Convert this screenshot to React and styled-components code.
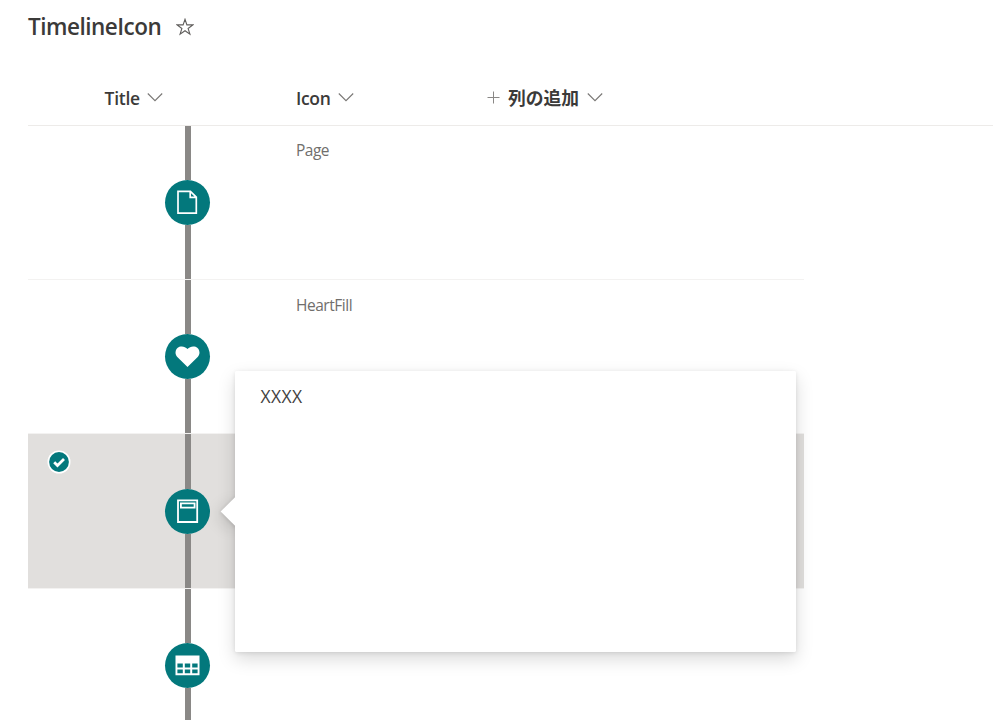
import React from "react";
import styled, { createGlobalStyle } from "styled-components";

const Global = createGlobalStyle`
  *, *::before, *::after { box-sizing: border-box; }
  body {
    margin: 0;
    background: #fff;
    overflow: hidden;
    font-family: "Open Sans", "Noto Sans CJK JP", sans-serif;
  }
  svg { display: block; flex: none; }
`;

const Page = styled.main`
  height: 720px;
  padding-left: 28px;
  overflow: hidden;
  background: #fff;
`;

const Heading = styled.header`
  display: flex;
  align-items: center;
  height: 54px;
  gap: 14.5px;
  padding-bottom: 1px;
`;

const ListTitle = styled.h1`
  margin: 0;
  width: 133px;
  font-size: 22.5px;
  line-height: 30px;
  font-weight: 600;
  letter-spacing: -0.5px;
  color: #3b3a39;
  white-space: nowrap;
`;

const columns = "76.5px 191.5px 191px 1fr";

const HeaderRow = styled.div`
  display: grid;
  grid-template-columns: ${columns};
  align-items: center;
  height: 72px;
  padding-top: 16px;
  border-bottom: 1px solid #edebe9;
`;

const HeaderCell = styled.div`
  display: flex;
  align-items: center;
  gap: 8px;
  color: #3b3a39;
`;

const HeaderLabel = styled.span`
  width: ${(p) => p.$width}px;
  font-size: ${(p) => p.$size || 17.5}px;
  line-height: 24px;
  font-weight: ${(p) => p.$weight || 600};
  letter-spacing: ${(p) => p.$spacing || 0}px;
  white-space: nowrap;
`;

const Row = styled.div`
  display: grid;
  grid-template-columns: 76.5px 191.5px 508px;
  width: 776px;
  height: ${(p) => p.$height}px;
  border-bottom: 1px solid #f3f2f1;
  background: ${(p) => (p.$selected ? "#e1dfdd" : "#fff")};
  background-clip: padding-box;
`;

const SelectCell = styled.div`
  padding: 15.5px 0 0 18.7px;
`;

const TimelineCell = styled.div`
  position: relative;
  display: flex;
  flex-direction: column;
  align-items: center;
  width: 166px;
`;

const Segment = styled.div`
  flex: 1;
  width: 6px;
  background: #8a8886;
`;

const Marker = styled.div`
  display: flex;
  align-items: center;
  justify-content: center;
  width: 45px;
  height: 45px;
  flex: none;
  border-radius: 50%;
  background: #03787c;
`;

const IconName = styled.div`
  padding-top: ${(p) => p.$top}px;
  font-size: 15.5px;
  line-height: 22px;
  letter-spacing: ${(p) => p.$spacing}px;
  color: #706e6c;
`;

/* Opens to the right of the marker whose cell it belongs to. */
const Callout = styled.aside`
  position: absolute;
  left: 130px;
  top: -63px;
  z-index: 2;
  width: 561.5px;
  height: 281px;
  border-radius: 2px;
  background: #fff;
  box-shadow: 0 7px 18px rgba(0, 0, 0, 0.15), 0 1px 4px rgba(0, 0, 0, 0.1);
`;

const Beak = styled.div`
  position: absolute;
  left: -10px;
  top: 130px;
  width: 21px;
  height: 21px;
  background: #fff;
  transform: rotate(45deg);
  box-shadow: 0 6px 16px rgba(0, 0, 0, 0.12), 0 1px 4px rgba(0, 0, 0, 0.1);
`;

const CalloutBody = styled.div`
  position: absolute;
  inset: 0;
  padding: 13px 26px;
  border-radius: 2px;
  background: #fff;
  font-size: 17.5px;
  line-height: 24px;
  letter-spacing: 0.4px;
  color: #424140;
`;

const Star = () => (
  <svg width="18" height="18" viewBox="0 0 18 18" fill="none" stroke="#605e5c" strokeWidth="1.1">
    <path d="M9 1.3 10.9 6.9H16.8L12.1 10.5 13.9 16.2 9 12.7 4.1 16.2 5.9 10.5 1.2 6.9H7.1Z" />
  </svg>
);

const Chevron = () => (
  <svg width="16" height="12" viewBox="0 0 16 12" fill="none" stroke="#797775" strokeWidth="1.1">
    <path d="M.8 1.5 8 8.7 15.2 1.5" />
  </svg>
);

const Plus = () => (
  <svg width="13" height="13" viewBox="0 0 13 13" fill="none" stroke="#8a8886" strokeWidth="1">
    <path d="M.5 6.5H12.5M6.5 .5V12.5" />
  </svg>
);

const Check = () => (
  <svg width="24" height="24" viewBox="0 0 24 24" fill="none">
    <circle cx="12" cy="12" r="11.5" fill="#fff" />
    <circle cx="12" cy="12" r="9.9" fill="#03787c" />
    <path d="M7.2 12.2 10.5 15.5 17 9.1" stroke="#fff" strokeWidth="2.8" />
  </svg>
);

const icons = {
  Page: (
    <svg width="25" height="25" viewBox="0 0 25 25" fill="none" stroke="#fff" strokeWidth="1.7">
      <path d="M3 1.3H15.4L21.3 7.2V23.1H3ZM15.2 1.6V7.3H21" />
    </svg>
  ),
  HeartFill: (
    <svg width="25" height="25" viewBox="0 0 25 25" fill="#fff">
      <path d="M12.5 23.1 2.3 13C-.8 9.8.3 4.2 4.4 2.8 7.4 1.8 10.4 2.7 12.5 5.1 14.6 2.7 17.6 1.8 20.6 2.8 24.7 4.2 25.8 9.8 22.7 13Z" />
    </svg>
  ),
  Dictionary: (
    <svg width="25" height="25" viewBox="0 0 25 25" fill="none" stroke="#fff" strokeWidth="1.8">
      <path d="M3 1.4H22.2V23H3ZM5.9 4.4H19.6V8.6H5.9Z" />
    </svg>
  ),
  Table: (
    <svg width="25" height="25" viewBox="0 0 25 25">
      <path
        fill="#fff"
        fillRule="evenodd"
        d="M.5 2.4H24.5V22.2H.5ZM2.4 10.6V14.5H7.8V10.6ZM9.8 10.6V14.5H15.2V10.6ZM17.2 10.6V14.5H22.6V10.6ZM2.4 16.4V20.2H7.8V16.4ZM9.8 16.4V20.2H15.2V16.4ZM17.2 16.4V20.2H22.6V16.4Z"
      />
    </svg>
  ),
};

const items = [
  { icon: "Page", label: "Page", height: 154, spacing: -0.5, top: 13 },
  { icon: "HeartFill", label: "HeartFill", height: 154, spacing: -0.47, top: 14 },
  { icon: "Dictionary", height: 155, selected: true, note: "XXXX" },
  { icon: "Table", height: 154 },
];

export default function App() {
  return (
    <>
      <Global />
      <Page>
        <Heading>
          <ListTitle>TimelineIcon</ListTitle>
          <Star />
        </Heading>
        <HeaderRow>
          <span />
          <HeaderCell>
            <HeaderLabel $width={34.5} $spacing={-0.25}>Title</HeaderLabel>
            <Chevron />
          </HeaderCell>
          <HeaderCell>
            <HeaderLabel $width={34} $spacing={-0.35}>Icon</HeaderLabel>
            <Chevron />
          </HeaderCell>
          <HeaderCell>
            <Plus />
            <HeaderLabel $width={71} $size={17.8} $weight={700}>列の追加</HeaderLabel>
            <Chevron />
          </HeaderCell>
        </HeaderRow>
        {items.map((item) => (
          <Row key={item.icon} $height={item.height} $selected={item.selected}>
            <SelectCell>{item.selected && <Check />}</SelectCell>
            <TimelineCell>
              <Segment />
              <Marker>{icons[item.icon]}</Marker>
              <Segment />
              {item.note && (
                <Callout>
                  <Beak />
                  <CalloutBody>{item.note}</CalloutBody>
                </Callout>
              )}
            </TimelineCell>
            <IconName $spacing={item.spacing} $top={item.top}>{item.label}</IconName>
          </Row>
        ))}
      </Page>
    </>
  );
}
